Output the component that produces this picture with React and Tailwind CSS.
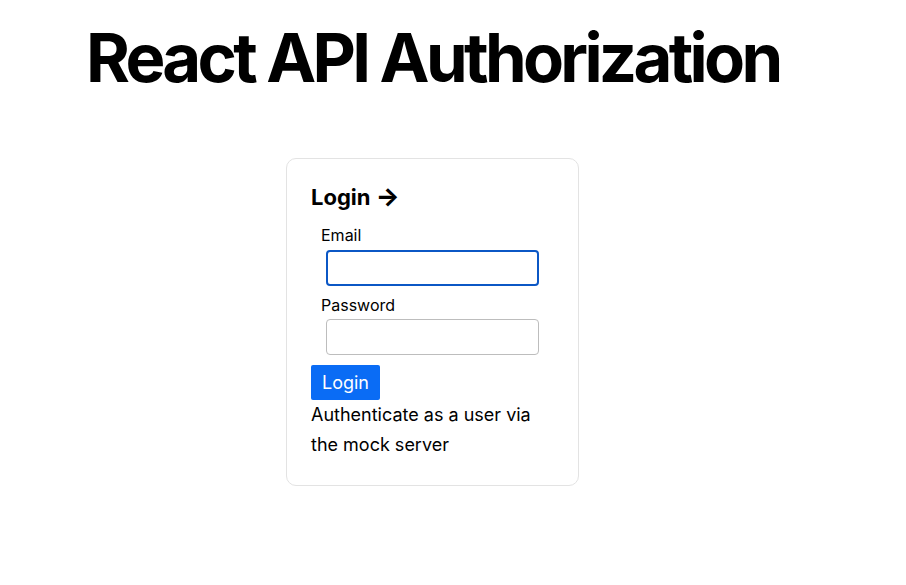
import React from 'react';

const App = () => {
  return (
    <div className="min-h-[585px] bg-white text-black font-['Inter','Liberation_Sans',sans-serif]">
      {/* Title */}
      <h1 className="pl-[86px] pt-[18px] text-[67px] font-bold leading-[80px] tracking-[-3.7px]">
        React API Authorization
      </h1>

      {/* Card */}
      <div className="ml-[286px] mt-[60px] w-[293px] border border-[#e3e3e3] rounded-[10px] px-6 pt-[23px] pb-[25px]">
        <h2 className="h-[30px] text-[22px] font-bold leading-[30px]">
          Login <span className="text-[25px] leading-[20px] font-extrabold">→</span>
        </h2>

        <form className="mt-[12px]" onSubmit={(e) => e.preventDefault()}>
          <label className="block pl-[10px] text-[16px] leading-[22px]">Email</label>
          <input
            type="email"
            className="block ml-[15px] mt-[4px] w-[213px] h-[36px] rounded-[4px] border-2 border-[#0b57c5] outline-none"
          />
          <label className="block pl-[10px] mt-[8px] text-[16px] leading-[22px]">Password</label>
          <input
            type="password"
            className="block ml-[15px] mt-[3px] w-[213px] h-[36px] rounded-[4px] border border-[#bdbdbd] outline-none"
          />
          <button
            type="submit"
            className="mt-[10px] h-[35px] px-[11px] rounded-[2px] bg-[#0a6cf5] text-white text-[18px] leading-[35px]"
          >
            Login
          </button>
        </form>

        <p className="w-[232px] text-[18px] leading-[30px]">
          Authenticate as a user via the mock server
        </p>
      </div>
    </div>
  );
};

export default App;
